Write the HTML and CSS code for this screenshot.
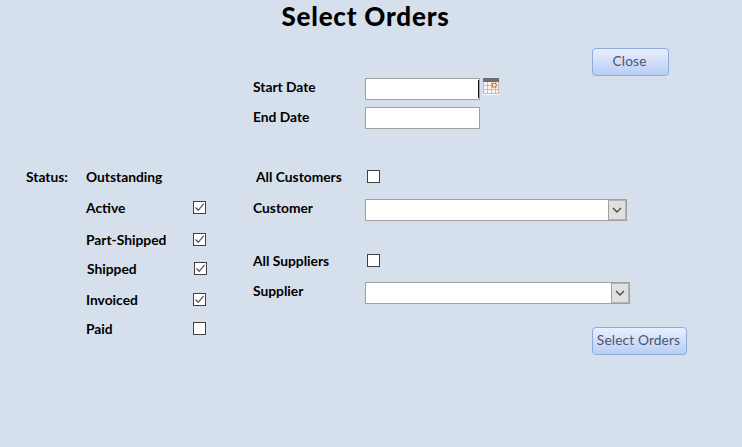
FILE: index.html
```html
<!DOCTYPE html>
<html lang="en">
<head>
    <meta charset="UTF-8">
    <title>Select Orders</title>
    <link rel="stylesheet" href="styles.css">
</head>
<body>

    <h1 class="title">Select Orders</h1>

    <div class="top-section">
        <div class="dates">
            <div class="date-row">
                <label class="field-label">Start Date</label>
                <div class="text-box text-box-focus"></div>
                <svg class="calendar" width="17" height="17" viewBox="0 0 17 17">
                    <rect x="0" y="0" width="16" height="4" fill="#6d6d6d"/>
                    <rect x="0" y="4" width="16" height="12" fill="#f6f6f6"/>
                    <path d="M0.5 4V15.5H15.5V4M4.5 4V15.5M8.5 4V15.5M12.5 4V15.5M0 7.5H16M0 11.5H16" fill="none" stroke="#bdbdbd"/>
                    <rect x="9.5" y="5.5" width="3.5" height="3.5" fill="#fff" stroke="#e8791e" stroke-width="1.2"/>
                    <rect x="0" y="16" width="16" height="1" fill="#fff"/>
                </svg>
            </div>
            <div class="date-row date-row-end">
                <label class="field-label">End Date</label>
                <div class="text-box"></div>
            </div>
        </div>
        <button class="action-btn close-btn">Close</button>
    </div>

    <div class="main-section">
        <!-- Status checkboxes -->
        <div class="status-col">
            <div class="status-head">
                <span class="status-label">Status:</span>
                <span class="field-label">Outstanding</span>
            </div>
            <div class="status-row row-active">
                <span class="field-label">Active</span>
                <span class="check-box"><svg width="11" height="11" viewBox="0 0 11 11"><path d="M1.5 5.5L4.2 8.3L9.6 1.8" fill="none" stroke="#555" stroke-width="1.3"/></svg></span>
            </div>
            <div class="status-row row-part">
                <span class="field-label">Part-Shipped</span>
                <span class="check-box"><svg width="11" height="11" viewBox="0 0 11 11"><path d="M1.5 5.5L4.2 8.3L9.6 1.8" fill="none" stroke="#555" stroke-width="1.3"/></svg></span>
            </div>
            <div class="status-row row-shipped">
                <span class="field-label">Shipped</span>
                <span class="check-box"><svg width="11" height="11" viewBox="0 0 11 11"><path d="M1.5 5.5L4.2 8.3L9.6 1.8" fill="none" stroke="#555" stroke-width="1.3"/></svg></span>
            </div>
            <div class="status-row row-invoiced">
                <span class="field-label">Invoiced</span>
                <span class="check-box"><svg width="11" height="11" viewBox="0 0 11 11"><path d="M1.5 5.5L4.2 8.3L9.6 1.8" fill="none" stroke="#555" stroke-width="1.3"/></svg></span>
            </div>
            <div class="status-row row-paid">
                <span class="field-label">Paid</span>
                <span class="check-box"></span>
            </div>
        </div>

        <!-- Customer and supplier pickers -->
        <div class="party-col">
            <div class="party-check all-customers">
                <span class="field-label">All Customers</span>
                <span class="check-box"></span>
            </div>
            <div class="party-select customer">
                <span class="field-label">Customer</span>
                <div class="combo combo-customer">
                    <span class="combo-arrow"><svg width="10" height="6" viewBox="0 0 10 6"><path d="M1 1L5 5L9 1" fill="none" stroke="#444" stroke-width="1.3"/></svg></span>
                </div>
            </div>
            <div class="party-check all-suppliers">
                <span class="field-label">All Suppliers</span>
                <span class="check-box"></span>
            </div>
            <div class="party-select supplier">
                <span class="field-label">Supplier</span>
                <div class="combo combo-supplier">
                    <span class="combo-arrow"><svg width="10" height="6" viewBox="0 0 10 6"><path d="M1 1L5 5L9 1" fill="none" stroke="#444" stroke-width="1.3"/></svg></span>
                </div>
            </div>
            <button class="action-btn select-btn">Select Orders</button>
        </div>
    </div>

</body>
</html>
```

FILE: styles.css
```css
/* General */
html, body {
    margin: 0;
    padding: 0;
    height: 100%;
    background: #d6dfec;
    overflow: hidden;
    font-family: "Lato", "Liberation Sans", sans-serif;
}

/* Heading */
.title {
    margin: 0;
    padding-top: 2px;
    width: 731px;
    height: 48px;
    box-sizing: border-box;
    text-align: center;
    font-size: 26px;
    line-height: 29px;
    font-weight: 900;
    letter-spacing: 0.8px;
    color: #000;
}

.field-label {
    font-size: 13.8px;
    font-weight: 700;
    color: #000;
    white-space: nowrap;
}

/* Date fields and close button */
.top-section {
    display: flex;
    padding-left: 253px;
    height: 81px;
}

.dates {
    padding-top: 30px;
    width: 339px;
}

.date-row {
    display: flex;
    align-items: flex-start;
}

.date-row .field-label {
    width: 112px;
    line-height: 18px;
}

.date-row-end {
    margin-top: 7px;
}

.date-row-end .field-label {
    line-height: 20px;
}

.text-box {
    box-sizing: border-box;
    display: flex;
    justify-content: flex-end;
    width: 115px;
    height: 22px;
    background: #fff;
    border: 1px solid #a0a0a0;
}

.text-box-focus::after {
    content: "";
    width: 1px;
    height: 18px;
    margin-top: 1px;
    background: #111;
}

.calendar {
    margin-left: 3px;
    flex-shrink: 0;
}

/* Buttons */
.action-btn {
    box-sizing: border-box;
    height: 28px;
    padding: 0 2px 3px 0;
    border: 1px solid #8eabdd;
    border-radius: 4px;
    background: linear-gradient(#e9effd, #b9cdf6);
    color: #4c5766;
    font-family: "Lato", "Liberation Sans", sans-serif;
    font-size: 13.8px;
    letter-spacing: 0.1px;
}

.close-btn {
    width: 77px;
}

.select-btn {
    display: block;
    width: 95px;
    margin: 23px 0 0 339px;
}

/* Lower part of the form */
.main-section {
    display: flex;
    padding-top: 38px;
    padding-left: 26px;
}

.status-col {
    width: 227px;
}

.status-head {
    display: flex;
    line-height: 20px;
}

.status-label {
    width: 60px;
    font-size: 13.8px;
    font-weight: 700;
    color: #000;
}

.status-row {
    display: flex;
    align-items: center;
    height: 20px;
    padding-left: 60px;
}

.status-row .field-label {
    width: 107px;
}

.row-active { margin-top: 10px; }
.row-part { margin-top: 12px; }
.row-shipped { margin-top: 9px; padding-left: 61px; }
.row-invoiced { margin-top: 11px; }
.row-paid { margin-top: 9px; }

.check-box {
    box-sizing: border-box;
    display: flex;
    align-items: center;
    justify-content: center;
    width: 13px;
    height: 13px;
    background: #fff;
    border: 1px solid #404040;
}

.party-check {
    display: flex;
    align-items: center;
    height: 20px;
}

.party-check .field-label {
    width: 114px;
}

.all-customers {
    padding-left: 3px;
    margin-top: -1px;
}

.all-customers .field-label {
    width: 111px;
}

.all-suppliers {
    margin-top: 29px;
}

.party-select {
    display: flex;
    align-items: center;
    height: 22px;
}

.party-select .field-label {
    width: 112px;
    margin-bottom: 6px;
}

.customer {
    margin-top: 13px;
}

.supplier {
    margin-top: 12px;
}

.combo {
    box-sizing: border-box;
    display: flex;
    justify-content: flex-end;
    height: 22px;
    background: #fff;
    border: 1px solid #a0a0a0;
}

.combo-customer {
    width: 262px;
}

.combo-supplier {
    width: 265px;
}

.combo-arrow {
    display: flex;
    align-items: center;
    justify-content: center;
    width: 16px;
    background: #e0e0e0;
    border: 1px solid #b4b4b4;
    border-left-color: #a0a0a0;
}
```
